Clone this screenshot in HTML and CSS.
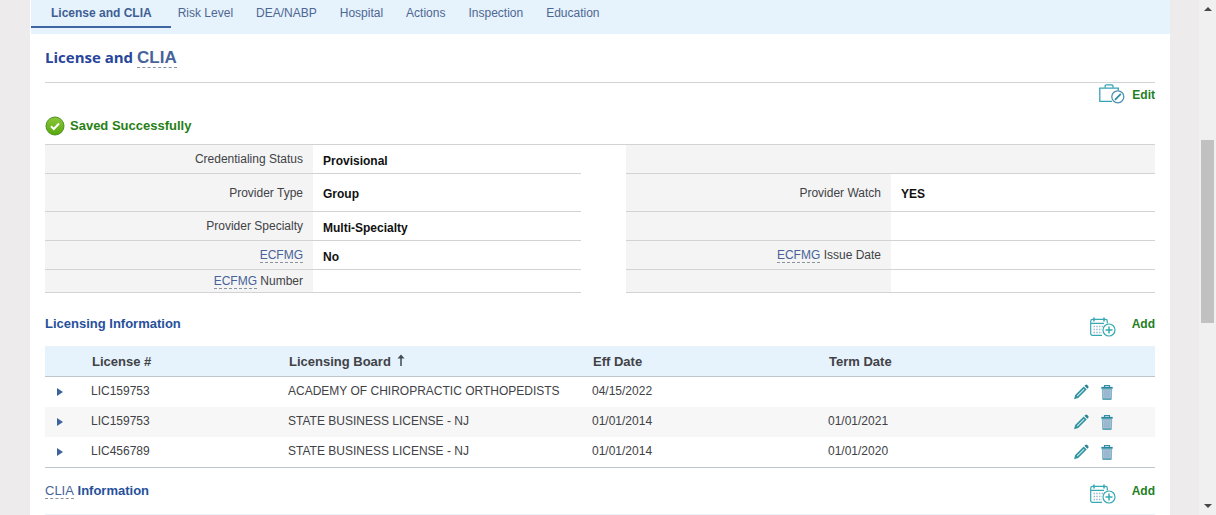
FILE: index.html
```html
<!DOCTYPE html>
<html lang="en">
<head>
<meta charset="utf-8">
<title>License and CLIA</title>
<meta name="viewport" content="width=device-width, initial-scale=1">
<link rel="stylesheet" href="styles.css">
</head>
<body>
<svg class="sprite" aria-hidden="true">
  <symbol id="calendar" viewBox="0 0 26 20">
    <g fill="none" stroke="#35a9b4" stroke-width="1.2">
      <path d="M12 18.4H2.5Q.7 18.400 .7 16.600V4.200Q.7 2.400 2.500 2.400H15.500Q17.300 2.400 17.300 4.200V6.500M.7 6.400H14"/>
      <path d="M4 .5V4.500M14 .5V4.500" stroke-width="1.500"/>
      <circle cx="19" cy="13" r="6"/>
      <path d="M19 9.500V16.500M15.500 13H22.500" stroke-width="1.500"/>
    </g>
    <path d="M3.500 9.500H13M3.500 12.500H12M3.500 15.500H12" stroke="#9bbcca" stroke-width="1.500" stroke-dasharray="1.500 1.200"/>
  </symbol>
  <symbol id="pencil" viewBox="0 0 16 16">
    <path d="M0 15.200L1.200 11L9.700 2.500L12.700 5.500L4.200 14Z" fill="#2f939f"/>
    <path d="M3.100 12.100L10.100 5.100" stroke="#cce5e9" stroke-width="1.200"/>
    <path d="M10.400 1.800L11.400.9Q12.400.1 13.300 1L14.200 1.900Q15.100 2.800 14.300 3.800L13.400 4.800Z" fill="#2f8091"/>
  </symbol>
  <symbol id="trash" viewBox="0 0 12 15">
    <path d="M1.300 4H10.700L10.300 14.300H1.700Z" fill="#a6bfd5" stroke="#6aaab9" stroke-width=".8"/>
    <path d="M.3 2.800H11.700" stroke="#2688a0" stroke-width="1.800"/>
    <path d="M3.500 2.300V.7H8.500V2.300" fill="none" stroke="#348ea3" stroke-width="1.200"/>
    <path d="M4 5.500V12.500M6 5.500V12.500M8 5.500V12.500" stroke="#87a9c5" stroke-width=".7"/>
    <path d="M1.800 14.100H10.200" stroke="#3695a7"/>
  </symbol>
  <symbol id="expand" viewBox="0 0 6 8">
    <path d="M0 0L6 4L0 8Z" fill="#3c639c"/>
  </symbol>
</svg>

<div class="viewport">
  <main class="page">
    <nav class="tabs" aria-label="Provider sections">
      <a class="tab tab-active" href="#license" aria-current="page">License and CLIA</a>
      <a class="tab" href="#risk">Risk Level</a>
      <a class="tab" href="#dea">DEA/NABP</a>
      <a class="tab" href="#hospital">Hospital</a>
      <a class="tab" href="#actions">Actions</a>
      <a class="tab" href="#inspection">Inspection</a>
      <a class="tab" href="#education">Education</a>
    </nav>

    <div class="content">
      <h1 class="title">License and <abbr class="term">CLIA</abbr></h1>

      <div class="toolbar">
        <button class="action" type="button">
          <svg class="icon-case" viewBox="0 0 26 20" aria-hidden="true">
            <g fill="none" stroke="#35a4b5" stroke-width="1.300">
              <path d="M13 17.400H.8V4.100H19.300V6.500"/>
              <path d="M6.200 3.800V2Q6.200 .8 7.400 .8H12.800Q14 .8 14 2V3.800"/>
              <circle cx="18.800" cy="12.800" r="6" stroke="#5090ae"/>
            </g>
            <path d="M16 15.800L21.800 9.800" stroke="#2a8ba6" stroke-width="1.700"/>
          </svg>
          <span>Edit</span>
        </button>
      </div>

      <p class="status" role="status">
        <svg class="icon-ok" viewBox="0 0 20 20" aria-hidden="true">
          <defs>
            <linearGradient id="ok" x1="0" y1="0" x2="0" y2="1">
              <stop offset="0" stop-color="#8cc63a"/>
              <stop offset="1" stop-color="#57a80c"/>
            </linearGradient>
          </defs>
          <circle cx="10" cy="10" r="9" fill="url(#ok)" stroke="#4c8f22"/>
          <path d="M6 10.300L8.800 13L14 7.500" fill="none" stroke="#fff" stroke-width="2"/>
        </svg>
        <span>Saved Successfully</span>
      </p>

      <table class="details">
        <colgroup>
          <col class="d-label"><col class="d-value"><col class="d-gap"><col class="d-label"><col>
        </colgroup>
        <tbody>
          <tr class="row-m"><th scope="row">Credentialing Status</th><td>Provisional</td><td class="gap"></td><td class="blank" colspan="2"></td></tr>
          <tr class="row-l"><th scope="row">Provider Type</th><td>Group</td><td class="gap"></td><th scope="row">Provider Watch</th><td>YES</td></tr>
          <tr class="row-m"><th scope="row">Provider Specialty</th><td>Multi-Specialty</td><td class="gap"></td><td class="blank"></td><td></td></tr>
          <tr class="row-m"><th scope="row"><abbr class="term">ECFMG</abbr></th><td>No</td><td class="gap"></td><th scope="row"><abbr class="term">ECFMG</abbr> Issue Date</th><td></td></tr>
          <tr class="row-s"><th scope="row"><abbr class="term">ECFMG</abbr> Number</th><td></td><td class="gap"></td><td class="blank"></td><td></td></tr>
        </tbody>
      </table>

      <section class="section">
        <header class="section-head">
          <h2>Licensing Information</h2>
          <button class="action" type="button"><svg class="icon-calendar" aria-hidden="true"><use href="#calendar"/></svg><span>Add</span></button>
        </header>
        <table class="records">
          <colgroup><col class="c-toggle"><col class="c-number"><col class="c-board"><col class="c-eff"><col class="c-term"><col></colgroup>
          <thead>
            <tr>
              <td></td>
              <th scope="col">License #</th>
              <th scope="col" aria-sort="ascending">Licensing Board <svg class="icon-sort" viewBox="0 0 8 12" aria-hidden="true"><path d="M4 12V2" stroke="#414a52" stroke-width="1.500"/><path d="M.5 4.500L4 .5L7.500 4.500Z" fill="#414a52"/></svg></th>
              <th scope="col">Eff Date</th>
              <th scope="col">Term Date</th>
              <td></td>
            </tr>
          </thead>
          <tbody>
            <tr>
              <td class="toggle"><button class="icon-button" type="button" aria-label="Expand"><svg class="icon-expand"><use href="#expand"/></svg></button></td>
              <td>LIC159753</td><td>ACADEMY OF CHIROPRACTIC ORTHOPEDISTS</td><td>04/15/2022</td><td></td>
              <td><div class="row-actions"><button class="icon-button" type="button" aria-label="Edit"><svg class="icon-pencil"><use href="#pencil"/></svg></button><button class="icon-button" type="button" aria-label="Delete"><svg class="icon-trash"><use href="#trash"/></svg></button></div></td>
            </tr>
            <tr>
              <td class="toggle"><button class="icon-button" type="button" aria-label="Expand"><svg class="icon-expand"><use href="#expand"/></svg></button></td>
              <td>LIC159753</td><td>STATE BUSINESS LICENSE - NJ</td><td>01/01/2014</td><td>01/01/2021</td>
              <td><div class="row-actions"><button class="icon-button" type="button" aria-label="Edit"><svg class="icon-pencil"><use href="#pencil"/></svg></button><button class="icon-button" type="button" aria-label="Delete"><svg class="icon-trash"><use href="#trash"/></svg></button></div></td>
            </tr>
            <tr>
              <td class="toggle"><button class="icon-button" type="button" aria-label="Expand"><svg class="icon-expand"><use href="#expand"/></svg></button></td>
              <td>LIC456789</td><td>STATE BUSINESS LICENSE - NJ</td><td>01/01/2014</td><td>01/01/2020</td>
              <td><div class="row-actions"><button class="icon-button" type="button" aria-label="Edit"><svg class="icon-pencil"><use href="#pencil"/></svg></button><button class="icon-button" type="button" aria-label="Delete"><svg class="icon-trash"><use href="#trash"/></svg></button></div></td>
            </tr>
          </tbody>
        </table>
      </section>

      <section class="section">
        <header class="section-head">
          <h2><abbr class="term">CLIA</abbr> Information</h2>
          <button class="action" type="button"><svg class="icon-calendar" aria-hidden="true"><use href="#calendar"/></svg><span>Add</span></button>
        </header>
        <div class="records-band"></div>
      </section>
    </div>
  </main>

  <div class="scrollbar" aria-hidden="true">
    <svg class="scroll-arrow" viewBox="0 0 8 4"><path d="M0 4L4 0L8 4Z" fill="#484848"/></svg>
    <div class="scroll-track">
      <div class="scroll-before"></div>
      <div class="scroll-thumb"></div>
      <div class="scroll-after"></div>
    </div>
    <svg class="scroll-arrow" viewBox="0 0 8 4"><path d="M0 0H8L4 4Z" fill="#484848"/></svg>
  </div>
</div>
</body>
</html>
```

FILE: styles.css
```css
* {
  box-sizing: border-box;
}

body {
  margin: 0;
  background: #edebec;
  color: #414246;
  font: 12px/16px "Liberation Sans", Arial, sans-serif;
}

h1, h2, p {
  margin: 0;
}

button {
  margin: 0;
  padding: 0;
  border: 0;
  background: none;
  font: inherit;
  cursor: pointer;
}

svg {
  display: block;
  flex: none;
}

.sprite {
  display: none;
}

.viewport {
  display: flex;
  height: 100vh;
  overflow: hidden;
}

.page {
  flex: 1;
  min-width: 0;
  margin: 0 29px 0 30px;
  border-left: 1px solid #fff;
  background: #fff;
  overflow: hidden;
}

.tabs {
  display: flex;
  height: 34px;
  background: #e6f2fc;
}

.tab {
  height: 28px;
  padding: 5px 16px 0 7px;
  color: #4d6793;
  text-decoration: none;
  white-space: nowrap;
}

.tab-active {
  padding: 5px 19px 0 20px;
  border-bottom: 2px solid #3f66a3;
  color: #3f5f94;
  font-weight: bold;
}

.content {
  padding: 0 15px 0 14px;
}

.title {
  height: 49px;
  padding-top: 12px;
  border-bottom: 1px solid #d3d3d5;
  color: #27459a;
  font: bold 15px/22px "Open Sans", sans-serif;
}

.term {
  border-bottom: 1px dashed #8a929c;
  color: #47639a;
  text-decoration: none;
}

.title .term {
  font: bold 17px/20px "Liberation Sans", Arial, sans-serif;
}

.toolbar {
  display: flex;
  justify-content: flex-end;
  height: 32px;
}

.action {
  display: flex;
  align-items: flex-start;
  gap: 8px;
  color: #1f801f;
  font-weight: bold;
}

.toolbar .action {
  gap: 7px;
}

.toolbar .action span {
  padding-top: 4px;
}

.status {
  display: flex;
  align-items: center;
  gap: 5px;
  height: 29px;
  padding-bottom: 7px;
  color: #267f14;
  font-size: 13px;
  font-weight: bold;
}

.details, .records {
  width: 100%;
  border-collapse: separate;
  border-spacing: 0;
  table-layout: fixed;
}

.details {
  border-top: 1px solid #d3d3d5;
}

.d-label {
  width: 268px;
}

.d-value {
  width: 268px;
}

.d-gap {
  width: 45px;
}

.d-gap + .d-label {
  width: 265px;
}

.details th, .details td {
  padding: 0 10px;
  border-bottom: 1px solid #d3d3d5;
}

.details th {
  background: #f4f4f4;
  font-weight: normal;
  text-align: right;
}

.details td {
  padding-top: 3px;
  color: #111;
  font-weight: bold;
}

.details .gap {
  border-bottom: 0;
}

.details .blank {
  background: #f4f4f4;
}

.row-m {
  height: 29px;
}

.row-l {
  height: 38px;
}

.row-s {
  height: 23px;
}

.section-head {
  display: flex;
  justify-content: space-between;
  height: 53px;
  padding-top: 23px;
}

.section + .section .section-head {
  height: 46px;
  padding-top: 15px;
}

.section-head h2 {
  color: #27509b;
  font-size: 13px;
  line-height: 16px;
}

.section-head .term {
  font-weight: normal;
}

.section-head .action {
  gap: 16px;
}

.icon-calendar {
  width: 26px;
  height: 20px;
  margin-top: 1px;
}

.icon-case {
  width: 26px;
  height: 20px;
  margin-top: 1px;
}

.icon-ok {
  width: 20px;
  height: 20px;
}

.icon-sort {
  display: inline-block;
  width: 8px;
  height: 12px;
  margin-left: 3px;
}

.icon-expand {
  width: 6px;
  height: 8px;
}

.icon-pencil {
  width: 16px;
  height: 16px;
}

.icon-trash {
  width: 12px;
  height: 15px;
}

.c-toggle {
  width: 46px;
}

.c-number {
  width: 197px;
}

.c-board {
  width: 304px;
}

.c-eff {
  width: 236px;
}

.c-term {
  width: 242px;
}

.records {
  border-bottom: 1px solid #bfc5ca;
}

.records td, .records th {
  height: 30px;
  padding: 0 0 2px;
  text-align: left;
  white-space: nowrap;
}

.records thead td, .records thead th {
  height: 31px;
  padding: 1px 0 0 1px;
  border-bottom: 1px solid #bfc5ca;
  background: #e6f2fc;
  font-size: 13px;
}

.records tbody tr:nth-child(even) {
  background: #f7f7f7;
}

.records .toggle {
  padding: 0 0 0 12px;
}

.row-actions {
  display: flex;
  align-items: center;
  gap: 11px;
  padding-top: 2px;
  padding-left: 4px;
}

.records-band {
  height: 31px;
  background: #e6f2fc;
}

.scrollbar {
  display: flex;
  flex-direction: column;
  align-items: center;
  width: 17px;
  padding: 7px 0;
  background: #f0f0f0;
}

.scroll-arrow {
  width: 8px;
  height: 4px;
}

.scroll-track {
  display: flex;
  flex: 1;
  flex-direction: column;
  width: 13px;
}

.scroll-before {
  flex: 129;
}

.scroll-thumb {
  flex: 183;
  background: #c1c1c1;
}

.scroll-after {
  flex: 181;
}
```
